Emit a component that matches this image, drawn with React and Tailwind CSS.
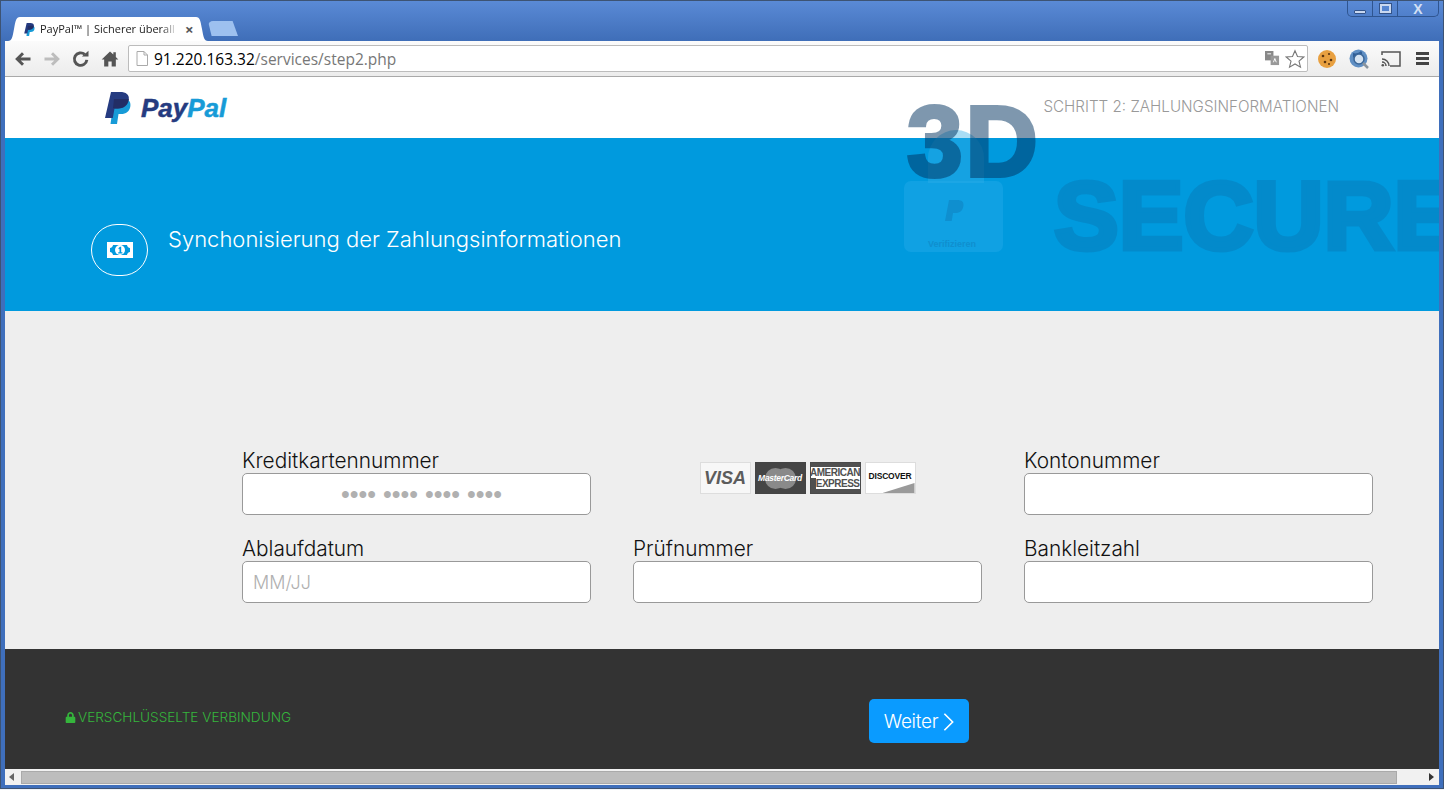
import { FaLock } from "react-icons/fa";

const labelFont = "font-['Inter','Liberation_Sans',sans-serif] font-light";

function PayPalMark({ className }) {
  return (
    <svg viewBox="0 0 26 32" className={className}>
      <path d="M9 7h9c5 0 8 2 7.400 7-.7 5.500-4.400 8-9.400 8h-2.500l-1.500 10H5.500Z" fill="#179bd7" />
      <path d="M6 0h9c6 0 9.500 2.500 8.800 7.500-.8 6-5 9-10.800 9H9.500L7.800 26H0Z" fill="#253b80" />
      <path d="M9 7h14.800c-.8 5.500-5 9.500-10.800 9.500H9.500L8 16Z" fill="#222d65" />
    </svg>
  );
}

function TabEdge({ flip }) {
  return (
    <svg viewBox="0 0 12 24" className={`h-[24px] w-[12px] ${flip ? "-scale-x-100" : ""}`}>
      <path d="M0 24c4 0 4.500-4 6-12C7.500 4 8 0 12 0v24Z" fill="#ffffff" />
    </svg>
  );
}

function ToolIcon({ children, className = "" }) {
  return (
    <svg viewBox="0 0 24 24" className={`h-[20px] w-[20px] shrink-0 ${className}`}>
      {children}
    </svg>
  );
}

function BrowserTop() {
  return (
    <>
      <div className="flex h-[40px] justify-between bg-gradient-to-b from-[#5a8ad6] to-[#3f6eb8]">
        <div className="flex items-end pl-[7px]">
          <div className="flex items-end">
            <TabEdge />
            <div className="flex h-[24px] w-[176px] items-center bg-white pl-[4px]">
              <PayPalMark className="h-[13px] w-[11px] shrink-0" />
              <span className="ml-[5px] w-[138px] overflow-hidden whitespace-nowrap font-['Open_Sans',sans-serif] text-[11px] leading-[24px] text-[#222] [mask-image:linear-gradient(to_right,black_88%,transparent)]">
                PayPal™ | Sicherer überall bei
              </span>
              <span className="ml-[7px] text-[15px] font-bold leading-none text-[#555]">×</span>
            </div>
            <TabEdge flip />
          </div>
          <div className="mb-[5px] h-[15px] w-[30px] rounded-t-[5px] bg-[#9dc0ef] [clip-path:polygon(0_0,82%_0,100%_100%,12%_100%)]" />
        </div>
        <div className="mr-[4px] flex h-[16px] w-[92px] rounded-b-[5px] border border-t-0 border-[#2f5590] text-[#c9d8f0]">
          <div className="flex w-[25px] items-end justify-center border-r border-[#2f5590] pb-[2px]">
            <div className="h-[4px] w-[12px] rounded-[1px] border border-[#34548a] bg-[#c9d8f0]" />
          </div>
          <div className="flex w-[25px] items-center justify-center border-r border-[#2f5590]">
            <div className="h-[9px] w-[11px] border-2 border-[#c9d8f0] outline outline-1 outline-[#34548a]" />
          </div>
          <div className="flex flex-1 items-center justify-center font-['Liberation_Sans',sans-serif] text-[14px] font-bold leading-none text-[#d3e0f4]">
            X
          </div>
        </div>
      </div>
      <div className="mx-[4px] flex h-[36px] items-center border-b border-[#a9a9a9] bg-gradient-to-b from-[#fbfbfb] to-[#ececec] pl-[8px] pr-[7px]">
        <ToolIcon className="text-[#555]">
          <path d="M21 12H6M12 5l-7 7 7 7" fill="none" stroke="currentColor" strokeWidth="3.500" />
        </ToolIcon>
        <ToolIcon className="ml-[9px] text-[#bdbdbd]">
          <path d="M3 12h15M12 5l7 7-7 7" fill="none" stroke="currentColor" strokeWidth="3.500" />
        </ToolIcon>
        <ToolIcon className="ml-[9px] text-[#555]">
          <path d="M19 13a7.500 7.500 0 1 1-2.500-6.500" fill="none" stroke="currentColor" strokeWidth="3.500" />
          <path d="M13 9h8V2Z" fill="currentColor" />
        </ToolIcon>
        <ToolIcon className="ml-[9px] text-[#555]">
          <path d="M12 3 2 12.500h3V21h5v-6h4v6h5v-8.500h3L19 9.500V4h-3v2.500Z" fill="currentColor" />
        </ToolIcon>
        <div className="ml-[8px] flex h-[27px] w-[1180px] items-center rounded-[2px] border border-[#bcbcbc] bg-white pl-[7px] pr-[2px]">
          <svg viewBox="0 0 12 15" className="h-[15px] w-[12px] shrink-0">
            <path d="M1 .500h7l3.500 3.500v10.500H1ZM8 .500V4h3.500" fill="#fff" stroke="#aaa" />
          </svg>
          <span className="ml-[6px] mt-[2px] font-['Open_Sans',sans-serif] text-[15.500px] leading-none text-black">
            91.220.163.32<span className="text-[#777]">/services/step2.php</span>
          </span>
          <svg viewBox="0 0 16 16" className="ml-auto h-[15px] w-[15px] shrink-0">
            <rect x="0" y="0" width="9" height="10" fill="#888" />
            <rect x="6" y="5" width="9" height="10" fill="#999" />
            <path d="M2.500 3h4M9 12l1.500-4 1.500 4" fill="none" stroke="#fff" strokeWidth="1" />
          </svg>
          <svg viewBox="0 0 24 24" className="ml-[5px] h-[20px] w-[20px] shrink-0">
            <path d="m12 2 3 7 7.500.6-5.700 4.900 1.800 7.300L12 18l-6.600 3.800 1.800-7.300L1.500 9.600 9 9Z" fill="#fff" stroke="#777" strokeWidth="1.300" />
          </svg>
        </div>
        <svg viewBox="0 0 20 20" className="ml-[9px] h-[20px] w-[20px] shrink-0">
          <circle cx="10" cy="10" r="9" fill="#e8a040" />
          <circle cx="6" cy="7" r="1.300" fill="#5a3410" />
          <circle cx="12" cy="5" r="1.100" fill="#5a3410" />
          <circle cx="14" cy="11" r="1.300" fill="#5a3410" />
          <circle cx="8" cy="13" r="1.300" fill="#5a3410" />
          <circle cx="12" cy="15" r="1" fill="#5a3410" />
        </svg>
        <svg viewBox="0 0 20 20" className="ml-[12px] h-[20px] w-[20px] shrink-0">
          <circle cx="9.500" cy="9.500" r="9" fill="#5f8fc4" />
          <path d="M4 4c3 1 6 0 8-2 2 2 1 4-1 5-3 1-5 3-7 1Z" fill="#2f5e98" />
          <circle cx="10" cy="10" r="5" fill="#d5e3f2" stroke="#3a6698" strokeWidth="1.500" />
          <path d="m14 14 5 5" stroke="#8a949e" strokeWidth="2.500" />
        </svg>
        <svg viewBox="0 0 20 16" className="ml-[12px] h-[16px] w-[20px] shrink-0">
          <path d="M1 4V1h18v14H9" fill="none" stroke="#555" strokeWidth="1.500" />
          <path d="M1 8a7 7 0 0 1 7 7M1 11a4 4 0 0 1 4 4" fill="none" stroke="#555" strokeWidth="1.500" />
          <circle cx="1.800" cy="14.200" r="1.300" fill="#555" />
        </svg>
        <div className="ml-[15px] flex w-[13px] shrink-0 flex-col gap-[2px]">
          <div className="h-[3px] bg-[#444]" />
          <div className="h-[3px] bg-[#444]" />
          <div className="h-[3px] bg-[#444]" />
        </div>
      </div>
    </>
  );
}

function SecureOverlay() {
  return (
    <div className="pointer-events-none absolute left-[899px] top-[51px] h-[130px] w-[560px]">
      <svg viewBox="0 0 100 125" className="absolute left-0 top-0 h-[125px] w-[100px]">
        <path d="M24 55V30a28 28 0 0 1 56 0v25Z" fill="#33ade6" fillOpacity="0.42" />
        <rect x="0" y="53" width="99" height="71" rx="7" fill="#29aceb" fillOpacity="0.4" />
        <path d="M45 72h8c5 0 7 2 6.400 6-.6 4.500-3.500 7-8 7h-2.400l-1.300 8H41Z" fill="#0f8fcf" />
      </svg>
      <span className="absolute left-[24px] top-[112px] font-['Liberation_Sans',sans-serif] text-[9px] font-bold leading-none text-[#0f8fcf]">
        Verifizieren
      </span>
      <span className="absolute left-[3px] top-[-41px] font-['Liberation_Sans',sans-serif] text-[100px] font-bold leading-[108px] tracking-[3px] text-[#00325f] opacity-50 [-webkit-text-stroke:4px_#00325f]">
        3D
      </span>
      <span className="absolute left-[150px] top-[37px] font-['Liberation_Sans',sans-serif] text-[97px] font-bold leading-[102px] text-[#0c5e96] opacity-25 [-webkit-text-stroke:5px_#0c5e96]">
        SECURE
      </span>
    </div>
  );
}

function MoneyIcon() {
  return (
    <svg viewBox="0 0 26 16" className="h-[16px] w-[26px]">
      <rect width="26" height="16" fill="#fff" />
      <path d="M6 3h14c0 1.500 1.500 3 3 3v4c-1.500 0-3 1.500-3 3H6c0-1.500-1.500-3-3-3V6c1.500 0 3-1.500 3-3Z" fill="#009ade" />
      <circle cx="13" cy="8" r="5" fill="#fff" />
      <path d="M11.300 6.300 13 4.800h1.200v5.400h1.200v1.300h-4.200v-1.300h1.300V6.800l-.6.500Z" fill="#009ade" />
    </svg>
  );
}

function Field({ label, placeholder, dots }) {
  return (
    <label className="flex flex-col">
      <span className={`${labelFont} text-[20.800px] leading-[24px] text-[#111]`}>{label}</span>
      <input
        readOnly
        placeholder={placeholder}
        className={`${labelFont} h-[42px] rounded-[5px] border border-[#999] bg-white px-[10px] placeholder:text-[#b0b0b0] ${
          dots ? "pl-[20px] text-center font-['Liberation_Sans',sans-serif] text-[25px] font-bold placeholder:text-[#aaa]" : "text-[18px]"
        }`}
      />
    </label>
  );
}

function CardLogos() {
  const logoBase = "flex h-[32px] w-[51px] items-center justify-center overflow-hidden border font-['Liberation_Sans',sans-serif]";
  return (
    <div className="flex h-[66px] items-start justify-center gap-[4px] pt-[13px]">
      <div className={`${logoBase} border-[#ddd] bg-[#f7f7f7] text-[18px] font-bold italic text-[#5c5c5c]`}>VISA</div>
      <div className={`${logoBase} relative border-[#444] bg-[#454545]`}>
        <div className="absolute left-[9px] top-[5px] h-[21px] w-[21px] rounded-full bg-[#8a8a8a]" />
        <div className="absolute right-[9px] top-[5px] h-[21px] w-[21px] rounded-full bg-[#8a8a8a]" />
        <span className="relative text-[8.500px] font-bold italic tracking-[-0.300px] text-white">MasterCard</span>
      </div>
      <div className={`${logoBase} flex-col border-[#4a4a4a] bg-[#505050] text-[10px] font-bold leading-[11px] tracking-[-0.500px]`}>
        <span className="bg-white text-[#505050]">AMERICAN</span>
        <span className="self-end bg-white text-[#505050]">EXPRESS</span>
      </div>
      <div className={`${logoBase} relative border-[#ddd] bg-white`}>
        <div className="absolute bottom-0 right-0 h-[10px] w-[32px] bg-[#9a9a9a] [clip-path:polygon(100%_0,100%_100%,0_100%)]" />
        <span className="relative mb-[4px] text-[8.500px] font-bold tracking-[-0.200px] text-[#111]">DISCOVER</span>
      </div>
    </div>
  );
}

function App() {
  return (
    <div className="h-[790px] w-[1444px] overflow-hidden bg-[#eef2f8]">
      <div className="flex h-[789px] flex-col border border-[#3d5373] bg-[#3f6fbc]">
        <BrowserTop />
        <div className="relative mx-[4px] flex h-[692px] flex-col overflow-hidden bg-white">
          <header className="flex h-[61px] shrink-0 items-center justify-between px-[100px]">
            <div className="flex items-center gap-[10px]">
              <PayPalMark className="h-[32px] w-[26px]" />
              <span className="font-['Liberation_Sans',sans-serif] text-[26px] font-bold italic leading-none [-webkit-text-stroke:0.500px_currentColor]">
                <span className="text-[#253b80]">Pay</span>
                <span className="text-[#179bd7]">Pal</span>
              </span>
            </div>
            <span className={`${labelFont} text-[15.200px] text-[#999]`}>SCHRITT 2: ZAHLUNGSINFORMATIONEN</span>
          </header>

          <section className="flex h-[173px] shrink-0 items-start gap-[20px] bg-[#009ade] pl-[86px] pt-[86px]">
            <div className="flex h-[52px] w-[57px] items-center justify-center rounded-full border border-white">
              <MoneyIcon />
            </div>
            <h1 className={`${labelFont} text-[22px] leading-[30px] text-white`}>Synchonisierung der Zahlungsinformationen</h1>
          </section>

          <section className="grid h-[338px] shrink-0 grid-cols-[349px_349px_349px] content-start gap-x-[42px] gap-y-[22px] bg-[#eeeeee] pl-[237px] pt-[138px]">
            <Field label="Kreditkartennummer" placeholder="•••• •••• •••• ••••" dots />
            <CardLogos />
            <Field label="Kontonummer" />
            <Field label="Ablaufdatum" placeholder="MM/JJ" />
            <Field label="Prüfnummer" />
            <Field label="Bankleitzahl" />
          </section>

          <footer className="flex h-[120px] shrink-0 items-start bg-[#333333] pl-[60px] pt-[50px]">
            <div className={`${labelFont} flex w-[804px] items-center gap-[2px] text-[13.600px] leading-[36px] text-[#35b53c]`}>
              <FaLock size={11} />
              VERSCHLÜSSELTE VERBINDUNG
            </div>
            <button className={`${labelFont} flex h-[44px] w-[100px] items-center justify-center gap-[5px] rounded-[5px] bg-[#0a9bff] pt-[2px] text-[19px] tracking-[-0.300px] text-white`}>
              Weiter
              <svg viewBox="0 0 12 20" className="h-[20px] w-[11px]">
                <path d="m1.500 1 9 9-9 9" fill="none" stroke="#fff" strokeWidth="1.800" />
              </svg>
            </button>
          </footer>

          <SecureOverlay />
        </div>
        <div className="mx-[4px] flex h-[16px] shrink-0 items-center bg-[#f1f1f1] px-[4px]">
          <div className="h-0 w-0 border-y-[4px] border-r-[5px] border-y-transparent border-r-[#666]" />
          <div className="ml-[7px] h-[13px] w-[1376px] border border-[#aaa] bg-[#bdbdbd]" />
          <div className="ml-auto mr-[1px] h-0 w-0 border-y-[4px] border-l-[5px] border-y-transparent border-l-[#333]" />
        </div>
      </div>
    </div>
  );
}

export default App;
